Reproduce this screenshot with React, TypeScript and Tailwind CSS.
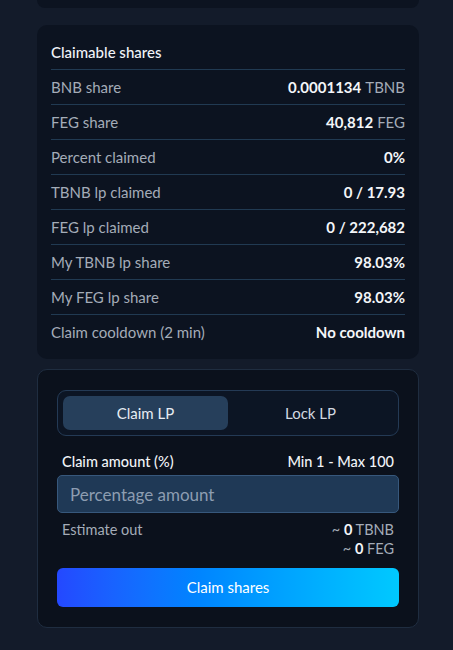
import React, { useState } from 'react'

const rows: { label: string; value: string; unit?: string }[] = [
  { label: 'BNB share', value: '0.0001134', unit: 'TBNB' },
  { label: 'FEG share', value: '40,812', unit: 'FEG' },
  { label: 'Percent claimed', value: '0%' },
  { label: 'TBNB lp claimed', value: '0 / 17.93' },
  { label: 'FEG lp claimed', value: '0 / 222,682' },
  { label: 'My TBNB lp share', value: '98.03%' },
  { label: 'My FEG lp share', value: '98.03%' },
  { label: 'Claim cooldown (2 min)', value: 'No cooldown' },
]

const App = () => {
  const [tab, setTab] = useState<'claim' | 'lock'>('claim')
  const [amount, setAmount] = useState('')

  return (
    <div
      className="min-h-[650px] bg-[#131b2a] pb-6 pl-[37px] pr-[34px] text-[15px]"
      style={{ fontFamily: 'Lato, "Noto Sans", sans-serif' }}
    >
      <div className="h-[8px] rounded-b-[10px] bg-[#0c1320]" />

      <div className="mt-[17px] rounded-[10px] bg-[#0c1320] px-[14px] pb-[10px] pt-[17px]">
        <h3 className="pb-[7px] text-[15px] font-medium leading-[20px] text-[#f1f4f8]">Claimable shares</h3>
        <dl>
          {rows.map((r) => (
            <div key={r.label} className="flex h-[35px] items-center justify-between border-t border-[#213a52]">
              <dt className="text-[#a4acb8]">{r.label}</dt>
              <dd className="font-bold text-[#f4f6f9]">
                {r.value}
                {r.unit && <span className="ml-1 font-normal text-[#a4acb8]">{r.unit}</span>}
              </dd>
            </div>
          ))}
        </dl>
      </div>

      <div className="mt-[10px] rounded-[10px] border border-[#1f2d40] bg-[#0b111c] px-[19px] pb-[20px] pt-[20px]">
        <div className="flex h-[46px] rounded-[9px] border border-[#243a55] bg-[#0c1524] p-[5px]">
          <button
            type="button"
            onClick={() => setTab('claim')}
            className={`flex-1 rounded-[7px] text-[15px] ${
              tab === 'claim' ? 'bg-[#263f5b] text-[#e6ecf3]' : 'text-[#d3d9e0]'
            }`}
          >
            Claim LP
          </button>
          <button
            type="button"
            onClick={() => setTab('lock')}
            className={`flex-1 rounded-[7px] text-[15px] ${
              tab === 'lock' ? 'bg-[#263f5b] text-[#e6ecf3]' : 'text-[#d3d9e0]'
            }`}
          >
            Lock LP
          </button>
        </div>

        <div className="mt-[17px] flex items-center justify-between px-[5px] text-[14.5px] font-medium leading-[18px] text-[#f1f4f8]">
          <span>Claim amount (%)</span>
          <span>Min 1 - Max 100</span>
        </div>
        <input
          value={amount}
          onChange={(e) => setAmount(e.target.value)}
          placeholder="Percentage amount"
          className="mt-[4px] h-[38px] w-full rounded-[5px] border border-[#37587c] bg-[#1f3956] px-[12px] text-[17px] text-white outline-none placeholder:text-[#8d9db1]"
        />

        <div className="mt-[7px] flex justify-between px-[5px] text-[14.5px] leading-[19px]">
          <span className="text-[#a4acb8]">Estimate out</span>
          <div className="text-right">
            <div className="text-[#a4acb8]">
              ~ <span className="font-bold text-[#f4f6f9]">0</span> TBNB
            </div>
            <div className="text-[#a4acb8]">
              ~ <span className="font-bold text-[#f4f6f9]">0</span> FEG
            </div>
          </div>
        </div>

        <button
          type="button"
          className="mt-[10px] h-[39px] w-full rounded-[6px] bg-gradient-to-r from-[#2448ff] to-[#00c9ff] text-[15px] text-white"
        >
          Claim shares
        </button>
      </div>
    </div>
  )
}

export default App
